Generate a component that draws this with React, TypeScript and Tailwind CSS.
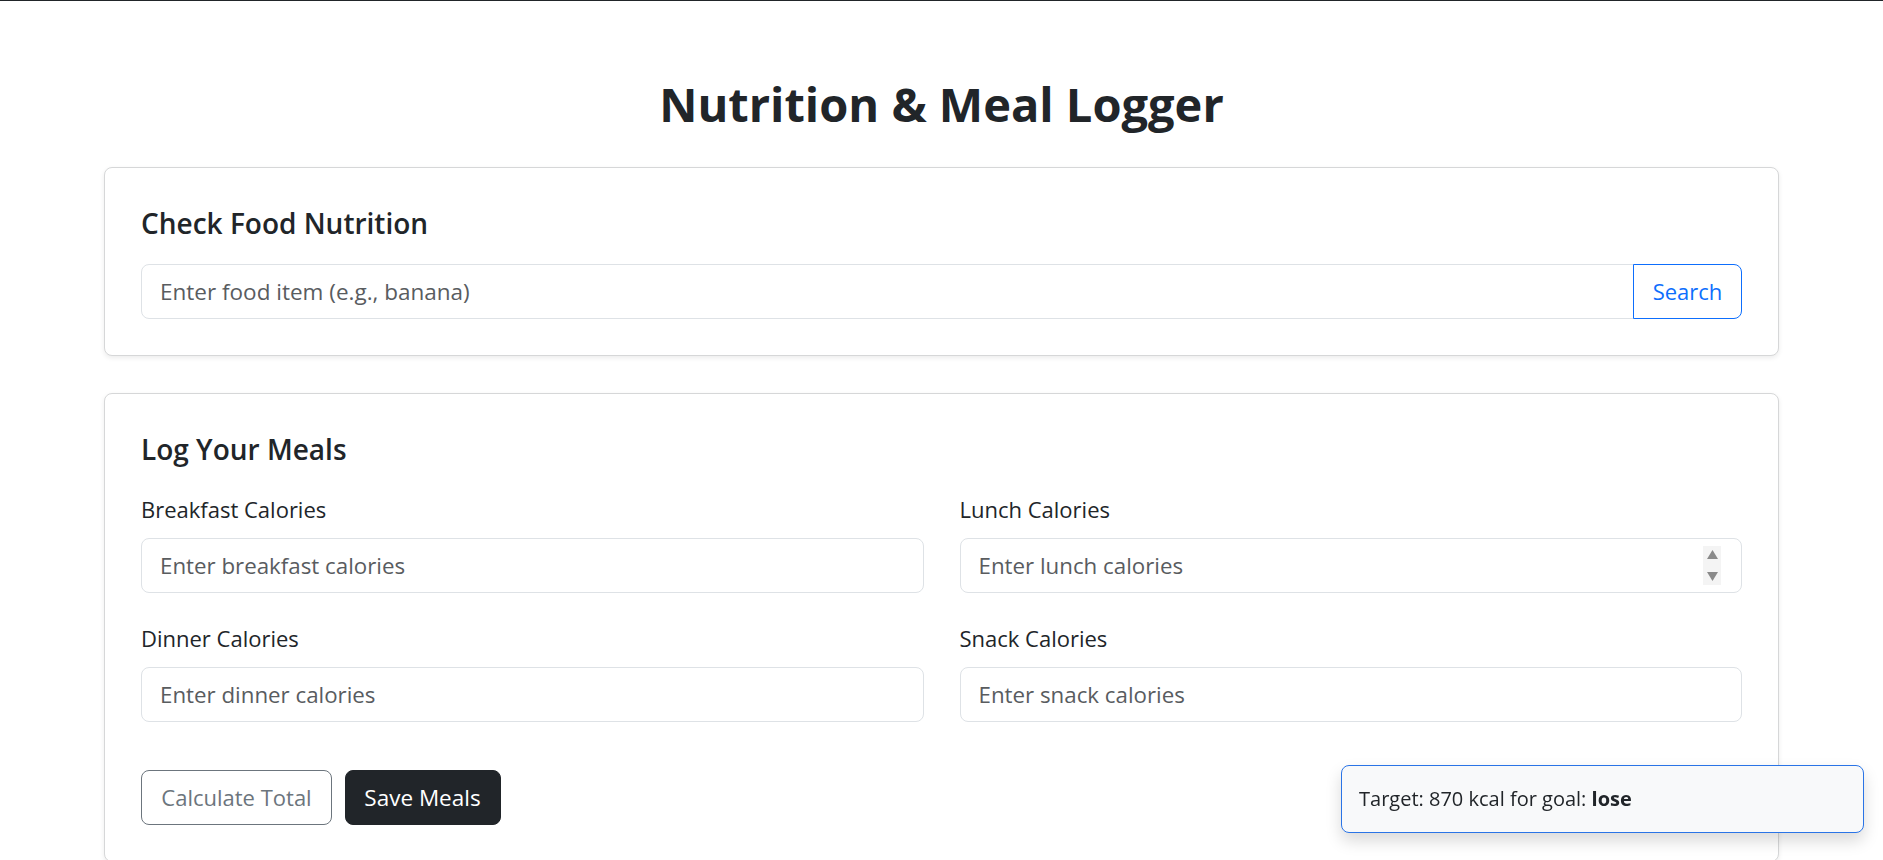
import { useState } from 'react';

interface MealField {
  key: string;
  label: string;
  placeholder: string;
  spinner?: boolean;
}

const mealFields: MealField[] = [
  { key: 'breakfast', label: 'Breakfast Calories', placeholder: 'Enter breakfast calories' },
  { key: 'lunch', label: 'Lunch Calories', placeholder: 'Enter lunch calories', spinner: true },
  { key: 'dinner', label: 'Dinner Calories', placeholder: 'Enter dinner calories' },
  { key: 'snack', label: 'Snack Calories', placeholder: 'Enter snack calories' },
];

const App = () => {
  const [food, setFood] = useState('');
  const [meals, setMeals] = useState<Record<string, string>>({});

  return (
    <div className="min-h-screen bg-white font-['Open_Sans',sans-serif] text-[#212529]">
      <div className="h-px bg-[#212529]" />

      <h1 className="pt-[75px] text-center text-[47px] font-bold leading-[56px]">
        Nutrition &amp; Meal Logger
      </h1>

      <div className="mx-auto mt-[35px] max-w-[1675px]">
        {/* 음식 영양 검색 */}
        <section className="rounded-[8px] border border-[#d6d7d8] bg-white px-[36px] pb-[36px] pt-[38px] shadow-[0_2px_5px_rgba(0,0,0,0.08)]">
          <h4 className="text-[28px] font-semibold leading-[34px]">Check Food Nutrition</h4>
          <div className="mt-[24px] flex h-[55px]">
            <input
              value={food}
              onChange={(e) => setFood(e.target.value)}
              placeholder="Enter food item (e.g., banana)"
              className="min-w-0 flex-1 rounded-l-[8px] border border-[#dee2e6] bg-white px-[18px] text-[22.5px] outline-none placeholder:text-[#595c5f]"
            />
            <button className="-ml-px w-[109px] rounded-r-[8px] border border-[#0d6efd] bg-white text-[22px] text-[#0d6efd]">
              Search
            </button>
          </div>
        </section>

        {/* 식사 기록 */}
        <section className="mt-[37px] rounded-[8px] border border-[#d6d7d8] bg-white px-[36px] pb-[36px] pt-[38px] shadow-[0_2px_5px_rgba(0,0,0,0.08)]">
          <h4 className="text-[28px] font-semibold leading-[34px]">Log Your Meals</h4>

          <div className="mt-[28px] grid grid-cols-2 gap-x-[36px] gap-y-[29.5px]">
            {mealFields.map((f) => (
              <div key={f.key}>
                <label className="block text-[22px] leading-[30px]">{f.label}</label>
                <div className="relative mt-[14px]">
                  <input
                    value={meals[f.key] || ''}
                    onChange={(e) => setMeals((prev) => ({ ...prev, [f.key]: e.target.value }))}
                    placeholder={f.placeholder}
                    className="block h-[55px] w-full rounded-[8px] border border-[#dee2e6] bg-white px-[18px] text-[22.3px] outline-none placeholder:text-[#595c5f]"
                  />
                  {f.spinner && (
                    <div className="absolute right-[21px] top-[8px] flex h-[39px] w-[18px] flex-col items-center justify-between bg-[#f4f4f4] py-[4px]">
                      <svg width="11" height="9" viewBox="0 0 11 9">
                        <path d="M5.5 0 L11 9 L0 9 Z" fill="#8a8a8a" />
                      </svg>
                      <svg width="11" height="9" viewBox="0 0 11 9">
                        <path d="M0 0 L11 0 L5.5 9 Z" fill="#8a8a8a" />
                      </svg>
                    </div>
                  )}
                </div>
              </div>
            ))}
          </div>

          <div className="mt-[48.5px] flex gap-[12.5px]">
            <button className="h-[55px] w-[191px] rounded-[8px] border border-[#6c757d] bg-white text-[22px] text-[#6c757d]">
              Calculate Total
            </button>
            <button className="h-[55px] w-[156px] rounded-[8px] border border-[#212529] bg-[#212529] text-[22.5px] text-white">
              Save Meals
            </button>
          </div>
        </section>
      </div>

      {/* 목표 알림 */}
      <div className="fixed bottom-[27px] right-[19px] flex h-[68px] w-[523px] items-center rounded-[8px] border border-[#2a74e6] bg-[#f8f9fa] pl-[17px] text-[20px] shadow-[0_8px_16px_rgba(0,0,0,0.15)]">
        <span>
          Target: 870 kcal for goal: <strong className="font-bold">lose</strong>
        </span>
      </div>
    </div>
  );
};

export default App;
